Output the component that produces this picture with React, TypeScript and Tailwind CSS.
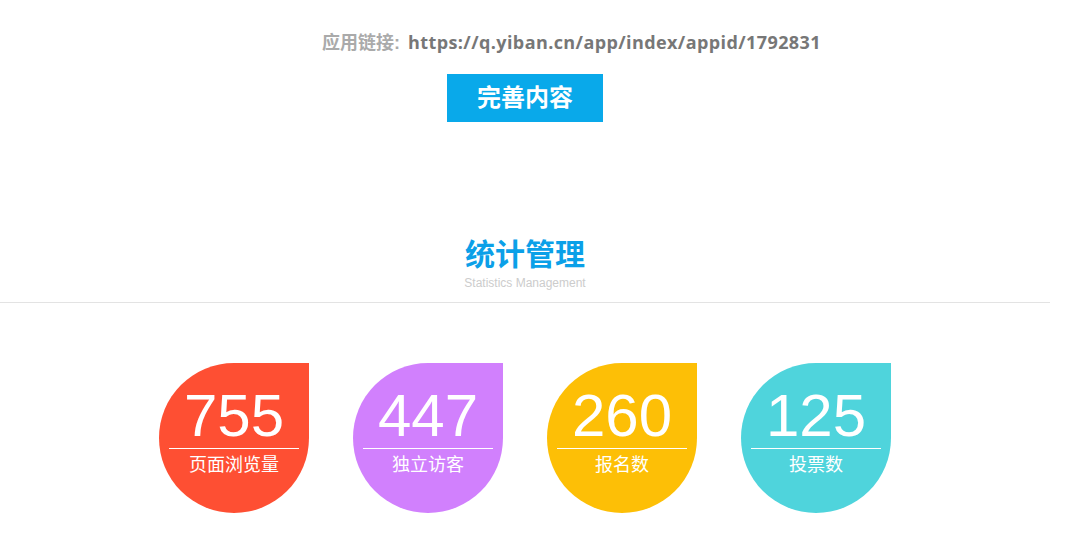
const stats = [
  { value: '755', label: '页面浏览量', bg: 'bg-[#fe4f33]' },
  { value: '447', label: '独立访客', bg: 'bg-[#d180fd]' },
  { value: '260', label: '报名数', bg: 'bg-[#fdbf06]' },
  { value: '125', label: '投票数', bg: 'bg-[#4fd4dc]' },
];

const cjk = "font-['Liberation_Sans','Noto_Sans_CJK_SC',sans-serif]";

function StatDrop({ value, label, bg }: { value: string; label: string; bg: string }) {
  return (
    <div className={`w-[150px] h-[150px] rounded-full rounded-tr-none ${bg} flex flex-col items-center pt-[23px] text-white`}>
      <div className="text-[60px] leading-[60px] font-['Liberation_Sans',Arial,sans-serif]">{value}</div>
      <div className="w-[130px] h-px bg-white mt-[2px]" />
      <div className={`mt-[4px] text-[18px] leading-[24px] ${cjk}`}>{label}</div>
    </div>
  );
}

export default function App() {
  return (
    <div className={`w-[1050px] bg-white ${cjk}`}>
      <div className="mt-[30px] h-[24px] pl-[322px] flex items-baseline text-[18px] leading-[24px] font-bold whitespace-nowrap">
        <span className="text-[#aaaaaa]">应用链接:</span>
        <span className="ml-[8px] text-[#777777] tracking-[0.4px] font-['Open_Sans','Noto_Sans_CJK_SC',sans-serif]">
          https://q.yiban.cn/app/index/appid/1792831
        </span>
      </div>
      <div className="flex justify-center mt-[20px]">
        <button className="w-[156px] h-[48px] bg-[#09a9ea] text-white text-[24px] font-bold leading-[48px]">
          完善内容
        </button>
      </div>

      <div className="mt-[115px] flex flex-col items-center">
        <h2 className="text-[30px] leading-[36px] font-bold text-[#0ba0e8]">统计管理</h2>
        <p className="text-[12px] leading-[16px] text-[#cccccc] font-['Liberation_Sans',Arial,sans-serif] mt-[2px]">
          Statistics Management
        </p>
      </div>
      <div className="mt-[11px] border-b border-[#e3e3e3]" />

      <div className="flex justify-center gap-[44px] mt-[60px] pb-[36px]">
        {stats.map((s) => (
          <StatDrop key={s.value} {...s} />
        ))}
      </div>
    </div>
  );
}
